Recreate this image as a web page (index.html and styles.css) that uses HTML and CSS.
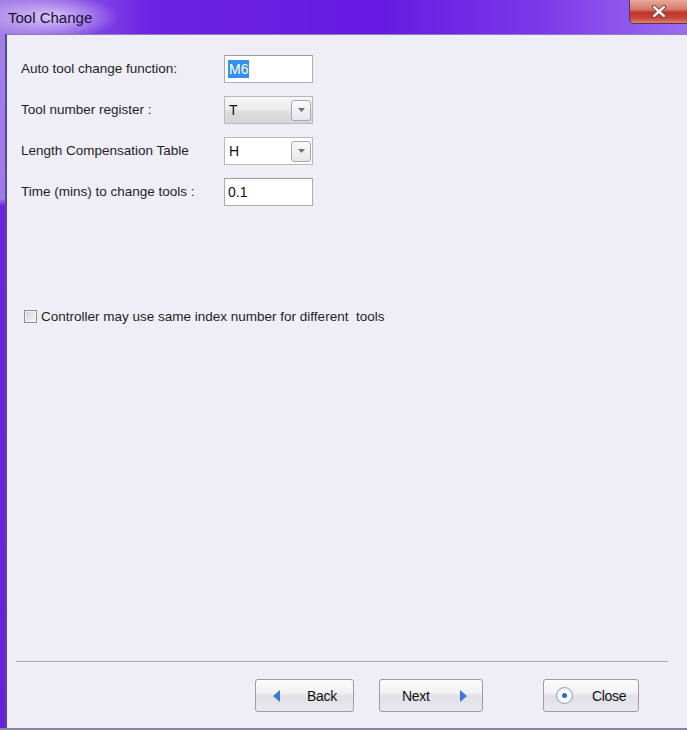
FILE: index.html
```html
<!DOCTYPE html>
<html lang="en">
<head>
    <meta charset="UTF-8">
    <meta name="viewport" content="width=device-width, initial-scale=1.0">
    <title>Tool Change</title>
    <link rel="stylesheet" href="styles.css">
</head>
<body>
    <div class="window">
        <div class="titlebar">
            <span class="title">Tool Change</span>
            <div class="close-x">
                <svg width="16" height="13" viewBox="0 0 16 13">
                    <path d="M3 2 L13 11 M13 2 L3 11" stroke="#6a3a3a" stroke-width="4.2" stroke-linecap="round"/>
                    <path d="M3 2 L13 11 M13 2 L3 11" stroke="#f4f0f0" stroke-width="2.4" stroke-linecap="round"/>
                </svg>
            </div>
        </div>
        <div class="frame">
            <div class="frame-left"></div>
            <div class="content">
                <div class="form">
                    <label class="field-label">Auto tool change function:</label>
                    <div class="textbox"><span class="selected">M6</span></div>

                    <label class="field-label">Tool number register :</label>
                    <div class="combo combo-readonly">
                        <span>T</span>
                        <span class="drop"><svg width="7" height="4" viewBox="0 0 7 4"><path d="M0 0 H7 L3.5 4 Z" fill="#707070"/></svg></span>
                    </div>

                    <label class="field-label">Length Compensation Table</label>
                    <div class="combo">
                        <span>H</span>
                        <span class="drop"><svg width="7" height="4" viewBox="0 0 7 4"><path d="M0 0 H7 L3.5 4 Z" fill="#707070"/></svg></span>
                    </div>

                    <label class="field-label">Time (mins) to change tools :</label>
                    <div class="textbox">0.1</div>
                </div>

                <div class="check-row">
                    <span class="checkbox"></span>
                    <span>Controller may use same index number for different&nbsp; tools</span>
                </div>

                <div class="spacer"></div>

                <div class="separator"></div>
                <div class="buttons">
                    <button class="btn btn-back">
                        <svg width="7" height="12" viewBox="0 0 7 12"><path d="M7 0 V12 L0 6 Z" fill="#3a78d8"/></svg>
                        <span>Back</span>
                    </button>
                    <button class="btn btn-next">
                        <span>Next</span>
                        <svg width="7" height="12" viewBox="0 0 7 12"><path d="M0 0 V12 L7 6 Z" fill="#3a78d8"/></svg>
                    </button>
                    <button class="btn btn-close">
                        <span class="radio"><span class="dot"></span></span>
                        <span>Close</span>
                    </button>
                </div>
            </div>
        </div>
        <div class="bottom-edge"></div>
    </div>
</body>
</html>
```

FILE: styles.css
```css
body {
    margin: 0;
    font-family: "Liberation Sans", Arial, sans-serif;
    font-size: 13.5px;
    color: #1e1e1e;
    overflow: hidden;
}
.window {
    width: 687px;
    height: 730px;
    display: flex;
    flex-direction: column;
}
.titlebar {
    height: 34px;
    flex-shrink: 0;
    display: flex;
    align-items: center;
    justify-content: space-between;
    background:
        radial-gradient(ellipse 70px 22px at 50px 17px, rgba(230, 215, 250, 0.85), rgba(230, 215, 250, 0) 100%),
        linear-gradient(to right, #a480e6 0%, #8c58e6 9%, #6c22e3 22%, #661ae2 55%, #7a38e8 78%, #9c6cf0 100%);
}
.title {
    font-size: 15px;
    color: #161035;
    padding-left: 8px;
    padding-top: 1px;
}
.close-x {
    align-self: flex-start;
    width: 58px;
    height: 23px;
    margin-right: -2px;
    border: 1px solid #5a3848;
    border-top: none;
    border-radius: 0 0 0 5px;
    background: linear-gradient(#e8aa9c 0%, #d77a6c 40%, #c0342c 55%, #c94a3e 80%, #e08070 100%);
    display: flex;
    align-items: center;
    justify-content: center;
}
.frame {
    flex: 1;
    display: flex;
    min-height: 0;
}
.frame-left {
    width: 5px;
    flex-shrink: 0;
    background: linear-gradient(#a07ee8 0px, #9e7ae8 165px, #6b22e2 172px, #6a1ee0 100%);
    border-right: 2px solid #57489a;
}
.content {
    flex: 1;
    background-color: #efeef6;
    border-top: 1px solid #8a7cb8;
    padding: 20px 0 0 14px;
    display: flex;
    flex-direction: column;
}
.form {
    display: grid;
    grid-template-columns: 203px 89px;
    grid-auto-rows: 28px;
    row-gap: 13px;
    align-items: center;
}
.field-label {
    line-height: 28px;
}
.textbox {
    height: 26px;
    border: 1px solid #abadb3;
    border-top-color: #9a9ca4;
    background: #fff;
    padding-left: 3px;
    font-size: 14px;
    line-height: 26px;
    color: #111;
}
.selected {
    background: #3390f0;
    color: #fff;
    padding: 1px 1px;
}
.combo {
    height: 26px;
    border: 1px solid #b8b8be;
    background: #fff;
    display: flex;
    align-items: center;
    justify-content: space-between;
    padding: 0 1px 0 4px;
    font-size: 14px;
    color: #111;
}
.combo-readonly {
    background: linear-gradient(#f6f6f6 0%, #ececec 45%, #dcdcdc 60%, #d4d4d4 100%);
}
.drop {
    width: 20px;
    height: 21px;
    box-sizing: border-box;
    border: 1px solid #a7a7b0;
    border-radius: 3px;
    background: linear-gradient(#fbfbfd, #e6e6ec);
    display: flex;
    align-items: center;
    justify-content: center;
}
.check-row {
    margin-top: 103px;
    margin-left: 3px;
    display: flex;
    align-items: center;
    gap: 4px;
}
.checkbox {
    width: 11px;
    height: 11px;
    border: 1px solid #8e8f8f;
    background: linear-gradient(135deg, #d4d4d8, #f8f8f8);
    box-shadow: inset 0 0 0 1px #f4f4f4;
}
.spacer {
    flex: 1;
}
.separator {
    height: 1px;
    background: #a4a4ac;
    margin: 0 19px 0 -5px;
    border-bottom: 1px solid #f8f8fc;
}
.buttons {
    height: 65px;
    display: flex;
    align-items: flex-start;
    padding-top: 16px;
    box-sizing: border-box;
}
.btn {
    height: 33px;
    border: 1px solid #9c9ca4;
    border-radius: 3px;
    background: linear-gradient(#fbfbfb 0%, #f2f2f4 42%, #e0e0e6 52%, #e8e8ee 100%);
    font-family: "Liberation Sans", Arial, sans-serif;
    font-size: 14px;
    color: #111;
    display: flex;
    align-items: center;
    padding: 0;
    letter-spacing: -0.3px;
}
.btn-back {
    margin-left: 234px;
    width: 99px;
    padding-left: 17px;
    gap: 27px;
}
.btn-next {
    margin-left: 25px;
    width: 104px;
    padding-left: 22px;
    gap: 30px;
}
.btn-close {
    margin-left: 60px;
    width: 96px;
    padding-left: 12px;
    gap: 19px;
}
.radio {
    width: 15px;
    height: 15px;
    border-radius: 50%;
    border: 1px solid #8aa0c0;
    background: radial-gradient(circle, #ffffff 40%, #d8e0ee 100%);
    display: flex;
    align-items: center;
    justify-content: center;
}
.dot {
    width: 5px;
    height: 5px;
    border-radius: 50%;
    background: #2f68c0;
}
.bottom-edge {
    height: 2px;
    flex-shrink: 0;
    background: #8a849a;
}
```
